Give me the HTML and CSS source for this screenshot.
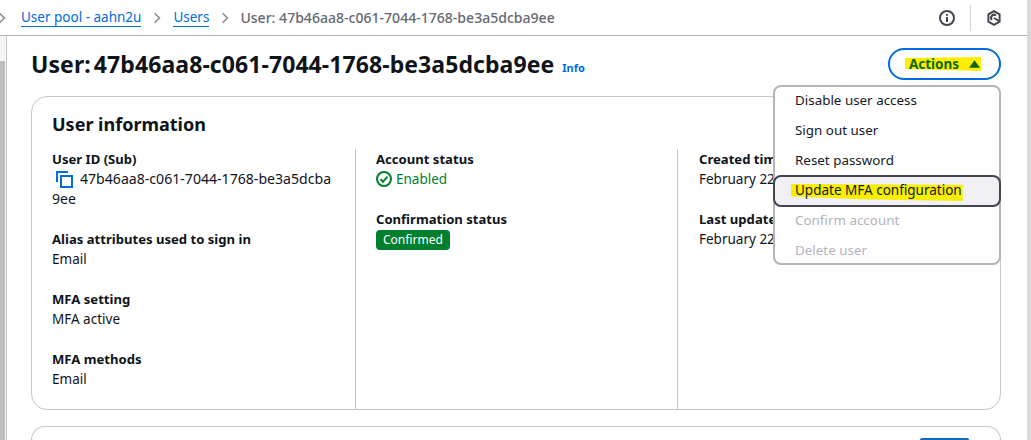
FILE: index.html
```html
<!DOCTYPE html>
<html lang="en">
<head>
<meta charset="utf-8">
<title>User details</title>
<link rel="stylesheet" href="styles.css">
</head>
<body>
<div class="frame">
  <div class="left-rail"><div class="rail-thumb"></div></div>
  <div class="page">
    <header class="topbar">
      <nav class="crumbs">
        <svg class="chev chev-cut" viewBox="0 0 10 16"><path d="M2 2l6 6-6 6"/></svg>
        <a class="crumb">User pool - aahn2u</a>
        <svg class="chev" viewBox="0 0 10 16"><path d="M2 2l6 6-6 6"/></svg>
        <a class="crumb">Users</a>
        <svg class="chev" viewBox="0 0 10 16"><path d="M2 2l6 6-6 6"/></svg>
        <span class="crumb-current">User: 47b46aa8-c061-7044-1768-be3a5dcba9ee</span>
      </nav>
      <div class="tools">
        <svg class="tool-icon" viewBox="0 0 16 16"><circle cx="8" cy="8" r="7"/><path d="M8 7v5M8 4v1.8"/></svg>
        <span class="tool-sep"></span>
        <svg class="tool-icon" viewBox="0 0 16 16"><path d="M8 1.2l5.6 3.2v7.2L8 14.8l-5.6-3.2V4.4z"/><path d="M8 8l5 3M6 9.8a2.6 2.6 0 0 1 4-4.2"/></svg>
      </div>
    </header>
    <main class="content">
      <div class="title-row">
        <h1 class="title">User: 47b46aa8-c061-7044-1768-be3a5dcba9ee</h1>
        <a class="info">Info</a>
        <div class="actions-wrap">
          <button class="actions"><span class="btn-mark">Actions<svg class="caret" viewBox="0 0 12 8"><path d="M6 0l6 8H0z"/></svg></span></button>
          <ul class="menu">
            <li class="menu-item">Disable user access</li>
            <li class="menu-item">Sign out user</li>
            <li class="menu-item">Reset password</li>
            <li class="menu-item active"><span class="mark">Update MFA configuration</span></li>
            <li class="menu-item disabled">Confirm account</li>
            <li class="menu-item disabled">Delete user</li>
          </ul>
        </div>
      </div>
      <section class="card">
        <h2 class="card-title">User information</h2>
        <div class="cols">
          <div class="col">
            <div class="field">
              <div class="label">User ID (Sub)</div>
              <div class="value uid"><svg class="copy" viewBox="0 0 17 17"><path d="M1 11V1h11"/><path d="M5 5h11v11H5z"/></svg>47b46aa8-c061-7044-1768-be3a5dcba<br>9ee</div>
            </div>
            <div class="field">
              <div class="label">Alias attributes used to sign in</div>
              <div class="value">Email</div>
            </div>
            <div class="field">
              <div class="label">MFA setting</div>
              <div class="value">MFA active</div>
            </div>
            <div class="field">
              <div class="label">MFA methods</div>
              <div class="value">Email</div>
            </div>
          </div>
          <div class="col">
            <div class="field">
              <div class="label">Account status</div>
              <div class="value status"><svg class="ok" viewBox="0 0 16 16"><circle cx="8" cy="8" r="7"/><path d="M4.5 8.2l2.5 2.5 4.5-5"/></svg>Enabled</div>
            </div>
            <div class="field">
              <div class="label">Confirmation status</div>
              <div class="value"><span class="badge">Confirmed</span></div>
            </div>
          </div>
          <div class="col col-last">
            <div class="field">
              <div class="label">Created time</div>
              <div class="value">February 22, 2025</div>
            </div>
            <div class="field">
              <div class="label">Last updated time</div>
              <div class="value">February 22, 2025</div>
            </div>
          </div>
        </div>
      </section>
      <section class="card-next"><span class="next-btn"></span></section>
    </main>
  </div>
  <div class="right-rail"></div>
</div>
</body>
</html>
```
FILE: styles.css
```css
* { box-sizing: border-box; }
html, body { margin: 0; height: 100%; overflow: hidden; background: #fff; }
body { font-family: "Noto Sans", "Open Sans", sans-serif; font-size: 14px; line-height: 20px; color: #0f141a; }
.frame { display: flex; width: 1031px; height: 440px; overflow: hidden; }
.left-rail { width: 7px; padding-top: 61px; background: #f4f4f4; border-right: 1px solid #c6c6cd; flex: none; }
.rail-thumb { width: 5px; height: 379px; background: #bdbdbd; }
.page { width: 1020px; flex: none; position: relative; }
.right-rail { width: 4px; flex: none; background: #d9d9d9; }
.topbar { height: 36px; margin-left: -7px; border-bottom: 1px solid #b4b4bb; display: flex; align-items: center; justify-content: space-between; padding: 0 25px 0 0; background: #fff; }
.crumbs { display: flex; align-items: center; }
.crumb { color: #006ce0; border-bottom: 1px solid #006ce0; font-size: 13.5px; line-height: 17px; margin-top: 1px; }
.crumb-current { color: #656871; font-weight: 500; font-size: 14.05px; margin-left: -1px; }
.chev { width: 8px; height: 14px; margin: 0 12px; fill: none; stroke: #8c8c94; stroke-width: 2; }
.chev-cut { margin: 0 15px 0 -2px; }
.tools { display: flex; align-items: center; }
.tool-icon { width: 16px; height: 16px; fill: none; stroke: #424650; stroke-width: 2; }
.tool-sep { width: 1px; height: 26px; background: #d1d5db; margin: 0 15px; }
.content { padding: 0 26px 0 24px; }
.title-row { display: flex; align-items: baseline; height: 60px; padding-top: 12px; position: relative; }
.title { margin: 0; font-size: 23px; line-height: 32px; font-weight: 700; color: #0f141a; word-spacing: -3px; letter-spacing: 0.08px; }
.info { margin-left: 8px; font-size: 11px; font-weight: 700; color: #006ce0; position: relative; top: -1px; }
.actions-wrap { position: absolute; right: 0; top: 12px; width: 113px; }
.actions { width: 113px; height: 32px; border: 2px solid #006ce0; border-radius: 20px; background: #fff; padding: 0 3px 0 0; font: 700 13.5px/20px "Noto Sans", sans-serif; color: #0a6a0a; display: flex; align-items: center; justify-content: center; }
.btn-mark { position: relative; isolation: isolate; display: flex; align-items: center; padding: 0 1px 0 4px; height: 20px; }
.btn-mark::before { content: ""; position: absolute; z-index: -1; left: 0; right: 0; top: 3px; bottom: 3px; background: #ffee00; clip-path: polygon(0 8%, 100% 0, 100% 100%, 50% 93%, 0 86%); }
.caret { width: 11px; height: 8px; margin-left: 10px; fill: #0a6a0a; }
.menu { position: absolute; top: 37px; right: 0; width: 228px; margin: 0; padding: 0; list-style: none; background: #fff; border: 2px solid #b4b4bb; border-radius: 8px; z-index: 2; }
.menu-item { height: 30px; line-height: 27px; padding-left: 20px; font-size: 13.4px; color: #16191f; }
.menu-item:last-child { height: 26px; }
.menu-item.active { height: 32px; background: #f0f0f5; border: 2px solid #424650; border-radius: 8px; margin: -2px -2px 0; padding-left: 20px; line-height: 26px; }
.mark { position: relative; isolation: isolate; display: inline-block; height: 17px; line-height: 17px; margin-left: -4px; padding: 0 1px 0 4px; font-size: 13.5px; }
.mark::before { content: ""; position: absolute; z-index: -1; left: 0; right: 0; top: 2px; bottom: -2px; background: #f7ee00; clip-path: polygon(0 0, 100% 5%, 100% 100%, 40% 90%, 0 72%); }
.disabled { color: #b4b4bb; }
.card { height: 314px; border: 1px solid #c6c6cd; border-radius: 16px; padding: 15px 20px 20px 20px; }
.card-title { margin: 0 0 13px; font-size: 18px; line-height: 24px; font-weight: 700; color: #0f141a; }
.cols { display: grid; grid-template-columns: 303px 322px 1fr; height: 239px; }
.col { padding-right: 20px; padding-left: 20px; border-left: 1px solid #c6c6cd; }
.col:first-child { border-left: 0; padding-left: 0; }
.col-last { padding-left: 21px; }
.field { margin-bottom: 20px; }
.label { font-weight: 700; font-size: 13.1px; }
.value { font-size: 13.5px; }
.uid { font-size: 14.1px; }
.copy { width: 17px; height: 17px; margin: 0 7px 0 4px; vertical-align: -4px; fill: none; stroke: #006ce0; stroke-width: 2; }
.status { color: #00802f; display: flex; align-items: center; }
.ok { width: 16px; height: 16px; margin-right: 4px; fill: none; stroke: #00802f; stroke-width: 2; }
.badge { display: inline-block; background: #00802f; color: #fff; font-size: 12px; line-height: 20px; padding: 0 7px; border-radius: 4px; }
.card-next { height: 14px; margin-top: 16px; border: 1px solid #c6c6cd; border-bottom: 0; border-radius: 16px 16px 0 0; position: relative; }
.next-btn { position: absolute; right: 31px; top: 11px; width: 49px; height: 2px; background: #0f6cbd; border-radius: 20px 20px 0 0; }
```
